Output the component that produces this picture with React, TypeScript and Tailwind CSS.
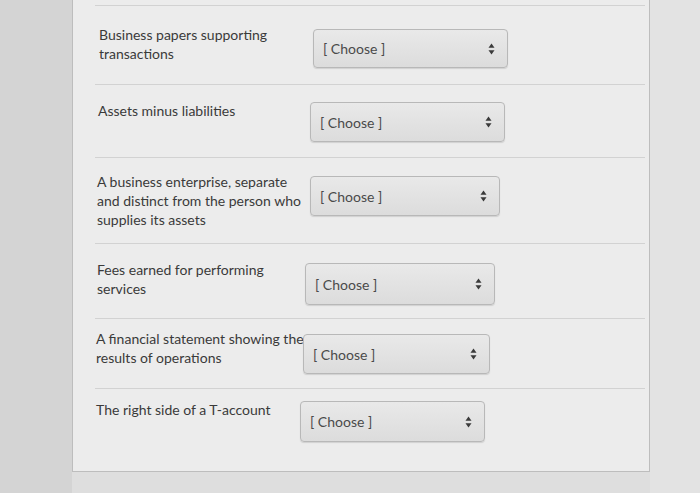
import React from 'react';

type Row = {
  label: string[];
  rowCls: string;
  textCls: string;
  selectCls: string;
};

const rows: Row[] = [
  {
    label: ['Business papers supporting', 'transactions'],
    rowCls: 'h-[79px]',
    textCls: 'ml-[4px] mt-[19px] w-[214px]',
    selectCls: 'mt-[23px] w-[195px] h-[39px]',
  },
  {
    label: ['Assets minus liabilities'],
    rowCls: 'h-[73px]',
    textCls: 'ml-[3px] mt-[16px] w-[212px]',
    selectCls: 'mt-[17px] w-[195px] h-[40px]',
  },
  {
    label: ['A business enterprise, separate', 'and distinct from the person who', 'supplies its assets'],
    rowCls: 'h-[86px]',
    textCls: 'ml-[2px] mt-[14px] w-[213px]',
    selectCls: 'mt-[18px] w-[190px] h-[40px]',
  },
  {
    label: ['Fees earned for performing', 'services'],
    rowCls: 'h-[75px]',
    textCls: 'ml-[2px] mt-[16px] w-[208px]',
    selectCls: 'mt-[19px] w-[190px] h-[42px]',
  },
  {
    label: ['A financial statement showing the', 'results of operations'],
    rowCls: 'h-[70px]',
    textCls: 'ml-[1px] mt-[10px] w-[207px]',
    selectCls: 'mt-[15px] w-[187px] h-[40px]',
  },
  {
    label: ['The right side of a T-account'],
    rowCls: 'h-[84px]',
    textCls: 'ml-[1px] mt-[11px] w-[204px]',
    selectCls: 'mt-[12px] w-[185px] h-[41px]',
  },
];

const Arrows = () => (
  <svg width="7" height="12" viewBox="0 0 7 12" className="text-[#3a3a3a]">
    <path d="M3.5 0.5 L6.5 4.8 L0.5 4.8 Z" fill="currentColor" />
    <path d="M3.5 11.5 L6.5 7.2 L0.5 7.2 Z" fill="currentColor" />
  </svg>
);

export default function App() {
  return (
    <div
      className="w-[700px] h-[493px] overflow-hidden bg-[#dedede] flex"
      style={{ fontFamily: 'Lato, "Open Sans", sans-serif' }}
    >
      <div className="w-[72px] bg-[#d4d4d4]" />
      <div className="w-[578px] h-[472px] bg-[#ececec] border-x border-b border-[#bdbdbd] pl-[22px] pr-[4px] pt-[5px]">
        {rows.map((r, i) => (
          <div key={i} className={`flex border-t border-[#d2d2d2] ${r.rowCls}`}>
            <div className={`text-[14px] leading-[19px] text-[#3a3a3a] ${r.textCls}`}>
              {r.label.map((l, j) => (
                <div key={j} className="whitespace-nowrap">
                  {l}
                </div>
              ))}
            </div>
            <div
              className={`flex items-center justify-between rounded-[4px] border border-[#b8b8b8] bg-gradient-to-b from-[#e9e9e9] to-[#dcdcdc] pl-[9px] pr-[12px] shadow-[0_1px_1px_rgba(0,0,0,0.12)] ${r.selectCls}`}
            >
              <span className="text-[14px] text-[#4a4a4a]">[ Choose ]</span>
              <Arrows />
            </div>
          </div>
        ))}
      </div>
      <div className="flex-1 bg-[#e3e3e3]" />
    </div>
  );
}
